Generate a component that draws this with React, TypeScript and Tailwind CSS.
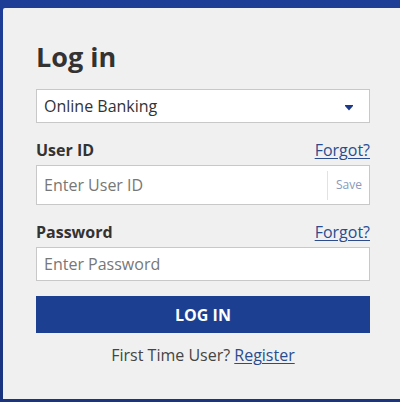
import React from 'react';

const font = { fontFamily: '"Open Sans", "Noto Sans", sans-serif' };

function Field({ label, placeholder, height, save }: { label: string; placeholder: string; height: string; save?: boolean }) {
  return (
    <div>
      <div className="flex items-center justify-between leading-[24px]">
        <span className="text-[16px] font-bold text-[#333]">{label}</span>
        <a href="#" className="text-[16px] text-[#2a4c8f] underline underline-offset-2">Forgot?</a>
      </div>
      <div className={`mt-[3px] flex items-center border border-[#c8c8c8] bg-white ${height}`}>
        <input
          className="h-full min-w-0 flex-1 bg-transparent px-[7px] text-[16px] text-[#333] outline-none placeholder:text-[#777]"
          placeholder={placeholder}
          style={font}
        />
        {save && (
          <div className="flex h-[29px] items-center border-l border-[#e2e2e2] pl-[8px] pr-[7px] text-[12px] text-[#8a9abb]">
            Save
          </div>
        )}
      </div>
    </div>
  );
}

export default function App() {
  return (
    <div
      className="h-[402px] w-[400px] overflow-hidden bg-gradient-to-b from-[#1e3d96] to-[#1a3480] pl-[3px] pt-[8px]"
      style={font}
    >
      <div className="h-[391px] w-[420px] rounded-tl-[2px] bg-[#f0f0f0] pl-[33px] pt-[31px]">
        <div className="w-[334px]">
          <h1 className="text-[27px] font-bold leading-[36px] text-[#333]">Log in</h1>

          {/* Account type select */}
          <div className="mt-[14px] flex h-[34px] items-center justify-between border border-[#c8c8c8] bg-white pl-[7px] pr-[16px]">
            <span className="text-[16px] text-[#333]">Online Banking</span>
            <svg width="8" height="6" viewBox="0 0 8 6" className="mt-[3px]">
              <path d="M0 0h8v1L4 5.5 0 1z" fill="#1d3a8a" />
            </svg>
          </div>

          <div className="mt-[15px]">
            <Field label="User ID" placeholder="Enter User ID" height="h-[40px]" save />
          </div>
          <div className="mt-[15px]">
            <Field label="Password" placeholder="Enter Password" height="h-[34px]" />
          </div>

          <button className="mt-[15px] flex h-[37px] w-full items-center justify-center bg-[#1d3f92] text-[16px] font-bold text-white">
            LOG IN
          </button>

          <p className="mt-[10px] text-center text-[16px] leading-[24px] text-[#444]">
            First Time User?{' '}
            <a href="#" className="text-[#2a4c8f] underline underline-offset-2">Register</a>
          </p>
        </div>
      </div>
    </div>
  );
}
